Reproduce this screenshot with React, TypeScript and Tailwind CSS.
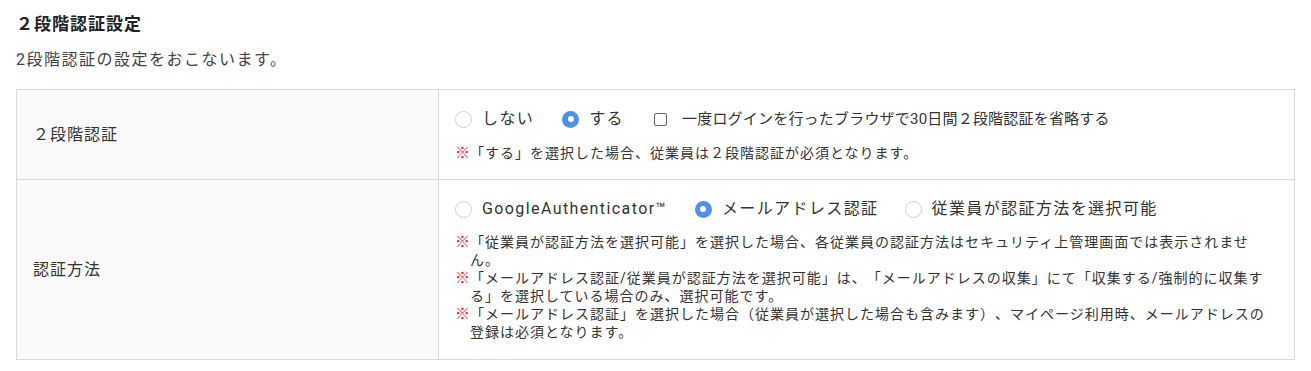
import React from "react";

const font = { fontFamily: "Roboto, 'Noto Sans CJK JP', sans-serif" };

function Radio({ checked, label, className = "" }: { checked?: boolean; label: string; className?: string }) {
  return (
    <label className={`flex items-center ${className}`}>
      {checked ? (
        <span className="flex h-[17px] w-[17px] shrink-0 items-center justify-center rounded-full bg-[#4f8fe8]">
          <span className="h-[6px] w-[6px] rounded-full bg-white" />
        </span>
      ) : (
        <span className="h-[17px] w-[17px] shrink-0 rounded-full border border-[#cfcfcf] bg-white" />
      )}
      <span className="ml-[10px] text-[16px] leading-[24px] tracking-[1.4px] text-[#333]">{label}</span>
    </label>
  );
}

function Note({ children }: { children: React.ReactNode }) {
  return (
    <div className="flex text-[14px] leading-[18px] tracking-[1px] text-[#333] [text-spacing-trim:space-all]">
      <span className="w-[15px] shrink-0 text-[15px] font-black leading-[18px] tracking-normal text-[#ee1c25]">※</span>
      <span>{children}</span>
    </div>
  );
}

export default function App() {
  return (
    <div className="bg-white px-4 pt-[12px] pb-[11px] [text-spacing-trim:space-all]" style={font}>
      <h2 className="text-[17px] font-bold leading-[24px] tracking-[1px] text-[#222]">２段階認証設定</h2>
      <p className="mt-[12px] text-[16px] leading-[24px] tracking-[1.5px] text-[#444]">2段階認証の設定をおこないます。</p>
      <div className="mt-[17px] border border-[#d9d9d9]">
        <div className="grid grid-cols-[422px_1fr]">
          <div className="flex items-center border-r border-[#d9d9d9] bg-[#fafafa] px-4 text-[16px] tracking-[1px] text-[#333]">
            ２段階認証
          </div>
          <div className="px-4 pt-[17px] pb-[17px]">
            <div className="flex items-center">
              <Radio label="しない" />
              <Radio checked label="する" className="ml-[28px]" />
              <label className="ml-[30px] flex items-center">
                <span className="h-[13px] w-[13px] shrink-0 rounded-[2px] border border-[#666] bg-white" />
                <span className="ml-[15px] text-[15px] leading-[24px] tracking-[0.2px] text-[#333]">
                  一度ログインを行ったブラウザで30日間２段階認証を省略する
                </span>
              </label>
            </div>
            <div className="mt-[13px]">
              <Note>「する」を選択した場合、従業員は２段階認証が必須となります。</Note>
            </div>
          </div>
        </div>
        <div className="grid grid-cols-[422px_1fr] border-t border-[#d9d9d9]">
          <div className="flex items-center border-r border-[#d9d9d9] bg-[#fafafa] px-4 text-[16px] tracking-[1px] text-[#333]">
            認証方法
          </div>
          <div className="px-4 pt-[17px] pb-[18px]">
            <div className="flex items-center">
              <Radio label="GoogleAuthenticator™" />
              <Radio checked label="メールアドレス認証" className="ml-[28px]" />
              <Radio label="従業員が認証方法を選択可能" className="ml-[26px]" />
            </div>
            <div className="mt-[12px]">
              <Note>「従業員が認証方法を選択可能」を選択した場合、各従業員の認証方法はセキュリティ上管理画面では表示されません。</Note>
              <Note>「メールアドレス認証/従業員が認証方法を選択可能」は、「メールアドレスの収集」にて「収集する/強制的に収集する」を選択している場合のみ、選択可能です。</Note>
              <Note>「メールアドレス認証」を選択した場合（従業員が選択した場合も含みます）、マイページ利用時、メールアドレスの登録は必須となります。</Note>
            </div>
          </div>
        </div>
      </div>
    </div>
  );
}
